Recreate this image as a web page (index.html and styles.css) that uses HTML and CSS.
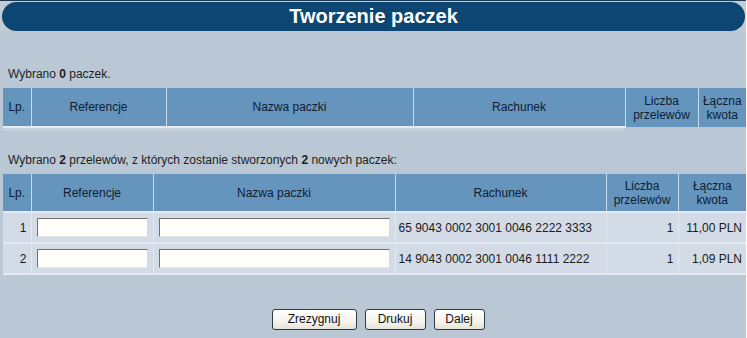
FILE: index.html
```html
<!DOCTYPE html>
<html lang="pl">
<head>
<meta charset="utf-8">
<title>Tworzenie paczek</title>
<link rel="stylesheet" href="styles.css">
</head>
<body>
<div class="page">
  <div class="title-wrap">
    <h1 class="title">Tworzenie paczek</h1>
  </div>

  <p class="info info-first">Wybrano <b>0</b> paczek.</p>
  <table class="grid grid-one">
    <colgroup>
      <col class="c1-lp"><col class="c1-ref"><col class="c1-name"><col class="c1-acc"><col class="c1-cnt"><col class="c1-sum">
    </colgroup>
    <thead>
      <tr>
        <th>Lp.</th><th>Referencje</th><th>Nazwa paczki</th><th>Rachunek</th><th>Liczba<br>przelewów</th><th>Łączna<br>kwota</th>
      </tr>
    </thead>
    <tbody>
      <tr class="empty-row"><td colspan="4"></td><td class="none"></td><td class="none"></td></tr>
    </tbody>
  </table>

  <p class="info info-second">Wybrano <b>2</b> przelewów, z których zostanie stworzonych <b>2</b> nowych paczek:</p>
  <table class="grid grid-two">
    <colgroup>
      <col class="c2-lp"><col class="c2-ref"><col class="c2-name"><col class="c2-acc"><col class="c2-cnt"><col class="c2-sum">
    </colgroup>
    <thead>
      <tr>
        <th>Lp.</th><th>Referencje</th><th>Nazwa paczki</th><th>Rachunek</th><th>Liczba<br>przelewów</th><th>Łączna<br>kwota</th>
      </tr>
    </thead>
    <tbody>
      <tr>
        <td class="num">1</td>
        <td class="inp"><input type="text" class="field field-ref"></td>
        <td class="inp"><input type="text" class="field field-name"></td>
        <td class="acc">65 9043 0002 3001 0046 2222 3333</td>
        <td class="num">1</td>
        <td class="num">11,00 PLN</td>
      </tr>
      <tr>
        <td class="num">2</td>
        <td class="inp"><input type="text" class="field field-ref"></td>
        <td class="inp"><input type="text" class="field field-name"></td>
        <td class="acc">14 9043 0002 3001 0046 1111 2222</td>
        <td class="num">1</td>
        <td class="num">1,09 PLN</td>
      </tr>
    </tbody>
  </table>

  <div class="actions">
    <button type="button" class="btn btn-cancel">Zrezygnuj</button>
    <button type="button" class="btn btn-print">Drukuj</button>
    <button type="button" class="btn btn-next">Dalej</button>
  </div>
</div>
</body>
</html>
```

FILE: styles.css
```css
* { box-sizing: border-box; }

html, body {
  margin: 0;
  padding: 0;
  background: #ffffff;
}

body {
  font-family: "Liberation Sans", Arial, sans-serif;
  font-size: 12px;
  color: #1c1c1c;
}

.page {
  width: 746px;
  height: 338px;
  background: #b9c8d4;
  overflow: hidden;
}

.title-wrap {
  background: #c3ccd2;
  padding: 1px 1px 0 2px;
  border-top: 1px solid #1f3b52;
  height: 31px;
}

.title {
  margin: 0;
  height: 29px;
  background: #0d4673;
  border-radius: 15px;
  color: #ffffff;
  font-family: "Liberation Sans", Arial, sans-serif;
  font-weight: bold;
  font-size: 20px;
  line-height: 29px;
  text-align: center;
}

.info {
  margin: 0;
  padding-left: 8px;
  line-height: 14px;
  color: #1e1e1e;
}

.info b { font-weight: bold; }

.info-first { margin-top: 36px; }
.info-second { margin-top: 22px; }

.grid {
  border-collapse: collapse;
  table-layout: fixed;
  width: 743px;
  margin-left: 3px;
}

.grid-one { margin-top: 7px; }
.grid-two { margin-top: 7px; }

.grid th {
  background: #6595bc;
  color: #0e1c35;
  font-weight: normal;
  font-size: 12px;
  line-height: 14px;
  text-align: center;
  padding: 0;
  border-right: 1px solid #c8dcec;
}

.grid th:last-child { border-right: none; }

.grid-one th { height: 39px; }
.grid-two th { height: 38px; }

.c1-lp { width: 28px; }
.c1-ref { width: 135px; }
.c1-name { width: 247px; }
.c1-acc { width: 212px; }
.c1-cnt { width: 73px; }
.c1-sum { width: 48px; }

.c2-lp { width: 28px; }
.c2-ref { width: 122px; }
.c2-name { width: 242px; }
.c2-acc { width: 211px; }
.c2-cnt { width: 72px; }
.c2-sum { width: 68px; }

.empty-row td {
  height: 4px;
  padding: 0;
  border-top: 2px solid #e6ecf1;
  background: #c7d2dc;
}

.empty-row td.none {
  border-top: none;
  background: transparent;
}

.grid-two td {
  background: #d3dbe7;
  height: 31px;
  padding: 0 3px;
  border-top: 2px solid #e3e9f0;
  border-right: 1px solid #e3e9f0;
  color: #1c1c1c;
  font-size: 12px;
  white-space: nowrap;
}

.grid-two td:last-child { border-right: none; }

.grid-two tbody tr:last-child td { border-bottom: 2px solid #e3e9f0; }

.grid-two td.num { text-align: right; padding-right: 4px; }
.grid-two td.acc { text-align: left; padding-left: 3px; }
.grid-two td.inp { padding-left: 5px; }

.field {
  display: block;
  height: 19px;
  margin: 0;
  padding: 0 2px;
  background: #fffefb;
  border: 1px solid;
  border-color: #6f6f6f #d8d8d8 #e6e6e6 #6f6f6f;
  font-family: "Liberation Sans", Arial, sans-serif;
  font-size: 12px;
}

.field-ref { width: 111px; }
.field-name { width: 231px; }

.actions {
  display: flex;
  justify-content: center;
  gap: 8px;
  margin-top: 34px;
  padding-left: 10px;
}

.btn {
  height: 21px;
  padding: 0;
  border: 1px solid #2e3a44;
  border-radius: 3px;
  background: linear-gradient(#ffffff, #f3f1ea 70%, #e4e1d8);
  color: #111111;
  font-family: "Liberation Sans", Arial, sans-serif;
  font-size: 12px;
  line-height: 19px;
}

.btn-cancel { width: 85px; }
.btn-print { width: 61px; }
.btn-next { width: 51px; }
```
